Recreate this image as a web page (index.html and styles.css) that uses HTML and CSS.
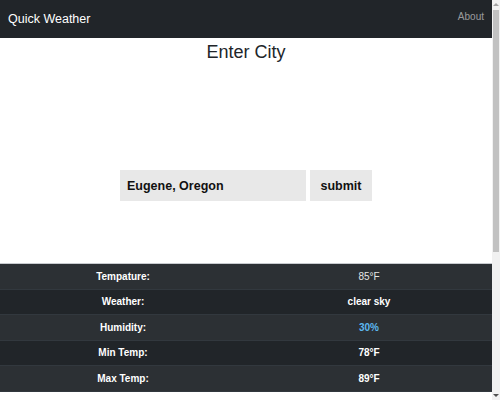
FILE: index.html
```html
<!DOCTYPE html>
<html lang="en">
<head>
<meta charset="utf-8">
<title>Quick Weather</title>
<link rel="stylesheet" href="styles.css">
</head>
<body>
<div class="page">
  <nav class="navbar">
    <span class="brand">Quick Weather</span>
    <a class="nav-link" href="#">About</a>
  </nav>
  <main class="main">
    <h3 class="title">Enter City</h3>
    <form class="search">
      <input class="city" type="text" value="Eugene, Oregon">
      <button class="submit" type="button">submit</button>
    </form>
  </main>
  <table class="weather">
    <tbody>
      <tr><th>Tempature:</th><td class="temp">85°F</td></tr>
      <tr><th>Weather:</th><td>clear sky</td></tr>
      <tr><th>Humidity:</th><td class="humid">30%</td></tr>
      <tr><th>Min Temp:</th><td>78°F</td></tr>
      <tr><th>Max Temp:</th><td>89°F</td></tr>
    </tbody>
  </table>
</div>
<div class="scrollbar" aria-hidden="true">
  <div class="arrow up"></div>
  <div class="thumb"></div>
  <div class="arrow down"></div>
</div>
</body>
</html>
```
FILE: styles.css
```css
html, body { height: 400px; overflow: hidden; }
body {
  margin: 0;
  display: flex;
  font-family: "Liberation Sans", Arial, sans-serif;
  color: #212529;
  background: #fff;
}
.page { width: 492px; flex: none; }
.scrollbar {
  width: 8px;
  height: 400px;
  background: #f1f1f1;
  display: flex;
  flex-direction: column;
  align-items: center;
}
.arrow { width: 0; height: 0; border-left: 3px solid transparent; border-right: 3px solid transparent; }
.arrow.up { border-bottom: 3px solid #a3a3a3; margin: 3px 0 4px; }
.arrow.down { border-top: 3px solid #505050; margin: auto 0 3px; }
.thumb { width: 6px; height: 242px; background: #c1c1c1; }
.navbar {
  display: flex;
  justify-content: space-between;
  align-items: flex-start;
  height: 38px;
  background: #212529;
  padding: 0 8px;
}
.brand {
  color: #fff;
  font-size: 12.5px;
  line-height: 18px;
  padding-top: 10px;
}
.nav-link {
  color: rgba(255,255,255,.55);
  font-size: 10px;
  line-height: 15px;
  padding-top: 9px;
  text-decoration: none;
}
.main {
  display: flex;
  flex-direction: column;
  align-items: center;
}
.title {
  margin: 2px 0 0;
  font-weight: 400;
  font-size: 18px;
  line-height: 24px;
}
.search {
  display: flex;
  gap: 4px;
  margin-top: 106px;
}
.city {
  width: 186px;
  height: 31px;
  box-sizing: border-box;
  border: 0;
  background: #e8e8e8;
  font-family: inherit;
  font-weight: 700;
  font-size: 12.5px;
  color: #111;
  padding: 0 7px;
}
.submit {
  width: 62px;
  height: 31px;
  border: 0;
  background: #e8e8e8;
  font-family: inherit;
  font-weight: 700;
  font-size: 12.5px;
  color: #111;
  padding: 0;
}
.weather {
  margin-top: 62px;
  width: 492px;
  border-collapse: collapse;
  border-top: 1px solid #c8cbcf;
  border-bottom: 1px solid #c8cbcf;
  background: #212529;
  color: #fff;
  font-size: 10px;
  table-layout: fixed;
}
.weather tr { height: 25.5px; border-bottom: 1px solid #32383e; }
.weather tr:nth-child(odd) { background: #2c3034; }
.weather th, .weather td {
  text-align: center;
  padding: 0;
  font-weight: 700;
}
.weather td.temp { font-weight: 400; color: #e6e6e6; }
.weather td.humid { color: #5cb8f0; }
```
